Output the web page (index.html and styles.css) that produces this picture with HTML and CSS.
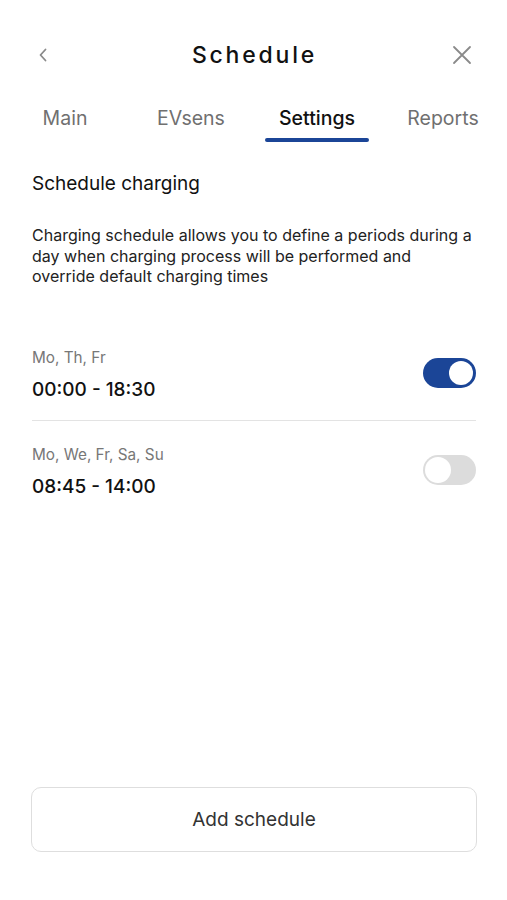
FILE: index.html
```html
<!DOCTYPE html>
<html>
<head>
<meta charset="utf-8">
<link rel="stylesheet" href="styles.css">
</head>
<body>

<header class="topbar">
	<button class="icon-btn back" aria-label="Back">
		<svg width="12" height="16" viewBox="0 0 12 16"><path d="M8.5 2.5 L3.5 8 L8.5 13.5" fill="none" stroke="#8a8a8a" stroke-width="1.8" stroke-linecap="round" stroke-linejoin="round"/></svg>
	</button>
	<h1 class="title">Schedule</h1>
	<button class="icon-btn close" aria-label="Close">
		<svg width="20" height="20" viewBox="0 0 20 20"><path d="M2 2 L18 18 M18 2 L2 18" fill="none" stroke="#8a8a8a" stroke-width="1.8" stroke-linecap="round"/></svg>
	</button>
</header>

<nav class="tabs">
	<a class="tab">Main</a>
	<a class="tab">EVsens</a>
	<a class="tab active">Settings</a>
	<a class="tab">Reports</a>
</nav>

<main class="content">
	<h2 class="section-title">Schedule charging</h2>
	<p class="intro">Charging schedule allows you to define a periods during a day when charging process will be performed and override default charging times</p>

	<ul class="schedules">
		<li class="schedule">
			<div class="schedule-info">
				<span class="days">Mo, Th, Fr</span>
				<span class="hours">00:00 - 18:30</span>
			</div>
			<span class="switch on"><span class="knob"></span></span>
		</li>
		<li class="schedule">
			<div class="schedule-info">
				<span class="days">Mo, We, Fr, Sa, Su</span>
				<span class="hours">08:45 - 14:00</span>
			</div>
			<span class="switch"><span class="knob"></span></span>
		</li>
	</ul>
</main>

<footer class="actions">
	<button class="add-btn">Add schedule</button>
</footer>

</body>
</html>
```

FILE: styles.css
```css
html {
	height: 100%;
	background: #fff;
}

body {
	margin: 0;
	height: 900px;
	display: flex;
	flex-direction: column;
	font-family: Inter, "Noto Sans", sans-serif;
	color: #111;
}

.topbar {
	display: flex;
	align-items: center;
	justify-content: space-between;
	height: 50px;
	margin-top: 30px;
	padding: 0 33px 0 31px;
}

.icon-btn {
	border: 0;
	background: none;
	padding: 0;
	width: 24px;
	height: 24px;
	display: flex;
	align-items: center;
	justify-content: center;
}

.title {
	margin: 0 0 0 4px;
	font-size: 23px;
	font-weight: 500;
	letter-spacing: 2.8px;
	line-height: 52px;
	color: #111;
}

.tabs {
	display: flex;
	padding: 0 1px 0 2px;
	margin-top: 17px;
}

.tab {
	flex: 1;
	position: relative;
	text-align: center;
	font-size: 19.5px;
	color: #707070;
	height: 45px;
	line-height: 42px;
}

.tab.active {
	color: #111;
	font-weight: 500;
}

.tab.active::after {
	content: "";
	position: absolute;
	left: 50%;
	bottom: 0;
	width: 104px;
	height: 4px;
	margin-left: -52px;
	border-radius: 2px;
	background: #1b4597;
}

.content {
	flex: 1;
	padding: 0 31px 0 32px;
}

.section-title {
	margin: 30px 0 0;
	font-size: 19px;
	font-weight: 400;
	line-height: 24px;
}

.intro {
	margin: 29px 0 0;
	font-size: 16px;
	line-height: 20.5px;
	color: #222;
}

.schedules {
	list-style: none;
	margin: 37px 0 0;
	padding: 0;
}

.schedule {
	display: flex;
	justify-content: space-between;
	padding: 24px 0 18px;
}

.schedule + .schedule {
	border-top: 1px solid #e3e3e3;
}

.schedule-info {
	display: flex;
	flex-direction: column;
}

.days {
	font-size: 15.3px;
	color: #777;
	line-height: 20px;
}

.hours {
	margin-top: 10px;
	font-size: 19px;
	font-weight: 500;
	line-height: 24px;
}

.switch {
	width: 53px;
	height: 30px;
	border-radius: 15px;
	background: #dcdcdc;
	position: relative;
	margin-top: 10px;
}

.switch .knob {
	position: absolute;
	top: 2px;
	left: 2px;
	width: 26px;
	height: 26px;
	border-radius: 50%;
	background: #fff;
}

.switch.on {
	background: #1b4597;
}

.switch.on .knob {
	left: auto;
	right: 3px;
	top: 3px;
	width: 24px;
	height: 24px;
}

.actions {
	padding: 0 30px 48px 31px;
}

.add-btn {
	width: 100%;
	height: 65px;
	border: 1px solid #dedede;
	border-radius: 10px;
	background: #fff;
	font-family: Inter, "Noto Sans", sans-serif;
	font-size: 19px;
	color: #333;
}
```
